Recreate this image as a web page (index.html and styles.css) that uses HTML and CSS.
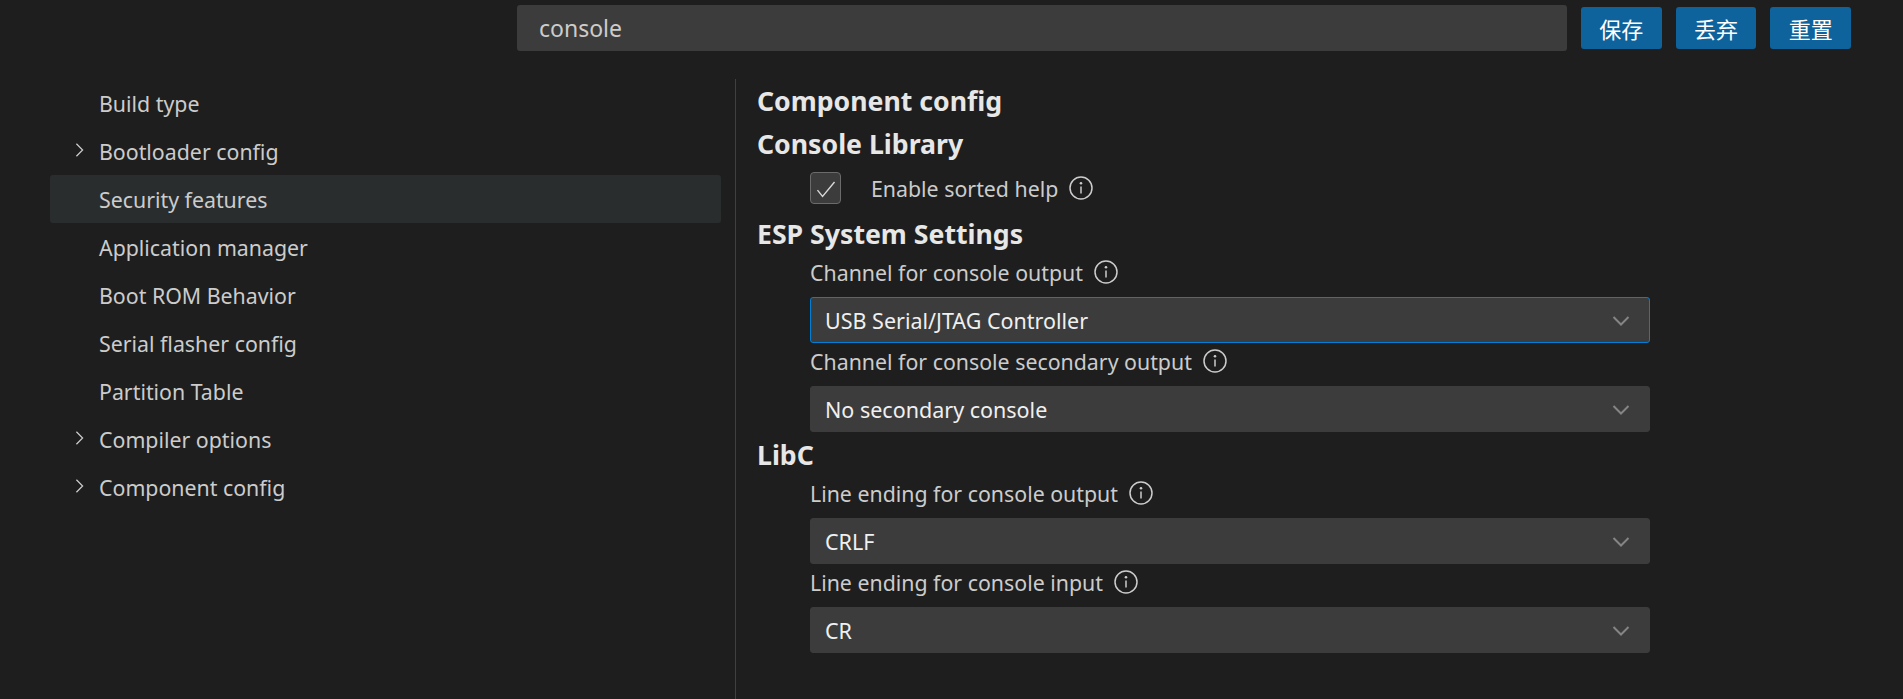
FILE: index.html
```html
<!DOCTYPE html>
<html lang="en">
<head>
<meta charset="utf-8">
<title>SDK Configuration</title>
<link rel="stylesheet" href="styles.css">
</head>
<body>
<header class="topbar">
  <div class="search">console</div>
  <div class="actions">
    <button class="btn">保存</button>
    <button class="btn">丢弃</button>
    <button class="btn">重置</button>
  </div>
</header>
<main class="body">
  <nav class="side">
    <div class="row">Build type</div>
    <div class="row"><svg class="twisty" viewBox="0 0 16 16"><path d="M5.7 2.5 11.2 8l-5.5 5.5"/></svg>Bootloader config</div>
    <div class="row sel">Security features</div>
    <div class="row">Application manager</div>
    <div class="row">Boot ROM Behavior</div>
    <div class="row">Serial flasher config</div>
    <div class="row">Partition Table</div>
    <div class="row"><svg class="twisty" viewBox="0 0 16 16"><path d="M5.7 2.5 11.2 8l-5.5 5.5"/></svg>Compiler options</div>
    <div class="row"><svg class="twisty" viewBox="0 0 16 16"><path d="M5.7 2.5 11.2 8l-5.5 5.5"/></svg>Component config</div>
  </nav>
  <section class="content">
    <h2 class="head">Component config</h2>
    <h2 class="head tall">Console Library</h2>
    <div class="check-row">
      <span class="check"><svg viewBox="0 0 16 16"><path d="M1.8 9.5 5.5 14.2 14.2 3.6"/></svg></span>
      <span class="check-text">Enable sorted help</span>
      <svg class="info" viewBox="0 0 24 24"><circle cx="12" cy="12" r="11"/><path d="M12 10.5v7"/><circle class="dot" cx="12" cy="7.3" r="1.3"/></svg>
    </div>
    <h2 class="head">ESP System Settings</h2>
    <div class="setting">
      <div class="label">Channel for console output<svg class="info" viewBox="0 0 24 24"><circle cx="12" cy="12" r="11"/><path d="M12 10.5v7"/><circle class="dot" cx="12" cy="7.3" r="1.3"/></svg></div>
      <div class="select focus">USB Serial/JTAG Controller<svg class="chev" viewBox="0 0 18 12"><path d="M1.5 2 9 9.5 16.500 2"/></svg></div>
    </div>
    <div class="setting">
      <div class="label">Channel for console secondary output<svg class="info" viewBox="0 0 24 24"><circle cx="12" cy="12" r="11"/><path d="M12 10.5v7"/><circle class="dot" cx="12" cy="7.3" r="1.3"/></svg></div>
      <div class="select">No secondary console<svg class="chev" viewBox="0 0 18 12"><path d="M1.5 2 9 9.5 16.500 2"/></svg></div>
    </div>
    <h2 class="head tall">LibC</h2>
    <div class="setting">
      <div class="label">Line ending for console output<svg class="info" viewBox="0 0 24 24"><circle cx="12" cy="12" r="11"/><path d="M12 10.5v7"/><circle class="dot" cx="12" cy="7.3" r="1.3"/></svg></div>
      <div class="select">CRLF<svg class="chev" viewBox="0 0 18 12"><path d="M1.5 2 9 9.5 16.500 2"/></svg></div>
    </div>
    <div class="setting">
      <div class="label">Line ending for console input<svg class="info" viewBox="0 0 24 24"><circle cx="12" cy="12" r="11"/><path d="M12 10.5v7"/><circle class="dot" cx="12" cy="7.3" r="1.3"/></svg></div>
      <div class="select">CR<svg class="chev" viewBox="0 0 18 12"><path d="M1.5 2 9 9.5 16.500 2"/></svg></div>
    </div>
  </section>
</main>
</body>
</html>
```

FILE: styles.css
```css
* { box-sizing: border-box; }
html, body { margin: 0; height: 100%; }
body {
  background: #1e1e1e;
  color: #cccccc;
  font-family: "Noto Sans", "Noto Sans CJK SC", sans-serif;
  font-size: 21.33px;
  overflow: hidden;
  display: flex;
  flex-direction: column;
}
.topbar {
  display: flex;
  align-items: center;
  height: 56px;
  padding: 0 0 0 517px;
  flex: none;
}
.search {
  width: 1050px;
  height: 46px;
  background: #3c3c3c;
  border-radius: 3px;
  padding-left: 22px;
  display: flex;
  align-items: center;
  font-size: 23px;
  color: #cccccc;
}
.actions { display: flex; gap: 14px; margin-left: 14px; }
.btn {
  width: 80.67px;
  height: 42px;
  border: 0;
  border-radius: 3px;
  background: #0e639c;
  color: #ffffff;
  font-family: "Noto Sans CJK SC", sans-serif;
  font-size: 22px;
  padding: 0;
}
.body { display: flex; flex: 1; min-height: 0; padding-top: 23px; }
.side { width: 735px; flex: none; padding-left: 50px; padding-right: 14px; }
.row {
  height: 48.06px;
  display: flex;
  align-items: center;
  padding-left: 49px;
  border-radius: 3px;
  position: relative;
}
.sel { background: #2a2d2e; }
.twisty {
  position: absolute;
  left: 20px;
  top: 14px;
  width: 18px;
  height: 18px;
  fill: none;
  stroke: #cccccc;
  stroke-width: 1.1;
}
.content {
  flex: 1;
  border-left: 1px solid #404040;
  padding-left: 21px;
}
.head {
  margin: 0;
  height: 42px;
  padding-top: 1px;
  display: flex;
  align-items: center;
  font-size: 26.67px;
  font-weight: 700;
  color: #e7e7e7;
}
.tall { height: 43px; }
.check-row {
  height: 48px;
  display: flex;
  align-items: center;
  padding-left: 53px;
}
.check {
  width: 31px;
  height: 32px;
  background: #3c3c3c;
  border: 1px solid #6b6b6b;
  border-radius: 4px;
  display: flex;
  align-items: center;
  justify-content: center;
  flex: none;
}
.check svg { width: 22px; height: 22px; flex: none; fill: none; stroke: #d8d8d8; stroke-width: 1; }
.check-text { margin-left: 30px; }
.info {
  width: 24px;
  height: 24px;
  margin-left: 11px;
  flex: none;
  fill: none;
  stroke: #cccccc;
  stroke-width: 1.5;
}
.info .dot { fill: #cccccc; stroke: none; }
.setting { padding-left: 53px; }
.label { height: 36px; display: flex; align-items: center; margin-bottom: 7px; }
.select {
  width: 840px;
  height: 46px;
  background: #3c3c3c;
  border: 1px solid #3c3c3c;
  border-radius: 3px;
  padding-left: 14px;
  display: flex;
  align-items: center;
  color: #f0f0f0;
  font-size: 21.5px;
  position: relative;
}
.focus { border-color: #007fd4; }
.chev {
  position: absolute;
  right: 19px;
  top: 17px;
  width: 18px;
  height: 12px;
  fill: none;
  stroke: #858585;
  stroke-width: 2;
}
```
